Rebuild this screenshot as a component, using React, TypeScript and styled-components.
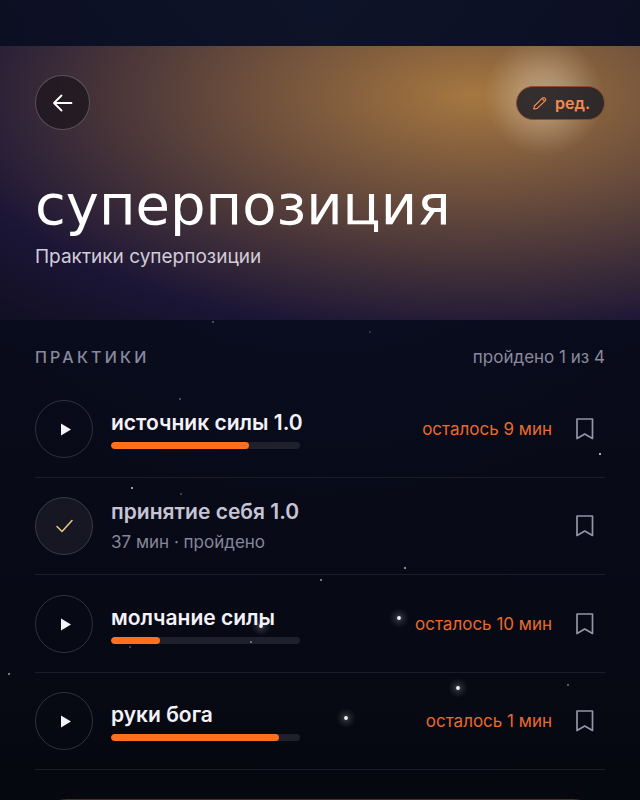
import React from "react";
import styled, { createGlobalStyle } from "styled-components";

const sans = `Inter, "Noto Sans", sans-serif`;

const GlobalStyle = createGlobalStyle`
  *, *::before, *::after { box-sizing: border-box; }
  html { background: #060810; scrollbar-width: none; }
  body { margin: 0; font-family: ${sans}; -webkit-font-smoothing: antialiased; }
  button { font: inherit; color: inherit; padding: 0; cursor: pointer; }
`;

const Page = styled.div`
  position: relative;
  min-height: 100vh;
  padding-top: 46px;
  color: #f4f2f8;
  background:
    radial-gradient(ellipse 70% 520px at 50% 0, rgba(14, 26, 52, 0.4), rgba(14, 26, 52, 0) 100%),
    linear-gradient(180deg, #0c0e20 0, #090b1b 320px, #070915 620px, #060810 800px);
`;

const Hero = styled.header`
  padding: 29px 35px 51px;
  background:
    radial-gradient(circle 60px at 85% 50px, rgba(255, 244, 226, 0.36) 0, rgba(255, 240, 220, 0.27) 40%, rgba(255, 238, 215, 0.06) 85%, rgba(255, 238, 215, 0) 100%),
    radial-gradient(ellipse 118% 122% at 74% 18%, #a67740 0%, #1b1536 72%, #0d0d1a 100%);
`;

const HeroBar = styled.div`
  display: flex;
  align-items: center;
  justify-content: space-between;
`;

const BackButton = styled.button`
  display: grid;
  place-items: center;
  width: 55px;
  height: 55px;
  border-radius: 50%;
  border: 1px solid rgba(255, 255, 255, 0.24);
  background: rgba(30, 22, 30, 0.78);
`;

const EditButton = styled.button`
  display: flex;
  align-items: center;
  gap: 7px;
  height: 34px;
  padding: 0 14px;
  border-radius: 17px;
  border: 1px solid #8d4a2c;
  background: rgba(38, 34, 40, 0.9);
  color: #f58a50;
  font-size: 16px;
  font-weight: 600;
`;

const Title = styled.h1`
  margin: 43px 0 0;
  font-family: "DejaVu Sans", ${sans};
  font-size: 56px;
  font-weight: 400;
  line-height: 64px;
  color: #fff;
`;

const Subtitle = styled.p`
  margin: 8px 0 0;
  font-size: 19px;
  line-height: 24px;
  color: #d3cdd8;
`;

const Section = styled.main`
  padding: 0 35px 35px;
`;

const SectionHead = styled.div`
  display: flex;
  align-items: center;
  justify-content: space-between;
  padding: 25px 0 11px;
  line-height: 24px;
  color: #8a8a9c;
`;

const SectionTitle = styled.h2`
  margin: 0;
  font-size: 16px;
  font-weight: 500;
  letter-spacing: 0.2em;
  text-transform: uppercase;
`;

const Count = styled.span`
  font-size: 17px;
`;

const List = styled.ul`
  display: grid;
  grid-auto-rows: 1fr;
  min-height: 390px;
  margin: 0;
  padding: 0;
  list-style: none;
`;

const Row = styled.li`
  display: flex;
  align-items: center;
  padding-top: 1px;
  border-bottom: 1px solid #1b1d29;
`;

const StateButton = styled.button<{ $done?: boolean }>`
  display: grid;
  place-items: center;
  flex: none;
  width: 58px;
  height: 58px;
  border-radius: 50%;
  border: 1px solid ${(p) => (p.$done ? "#3a3b45" : "#30313c")};
  background: ${(p) => (p.$done ? "#161722" : "transparent")};
`;

const Info = styled.div`
  flex: 1;
  min-width: 0;
  margin-left: 18px;
`;

const Name = styled.h3<{ $done?: boolean }>`
  margin: 0;
  font-size: 21px;
  font-weight: 600;
  line-height: 28px;
  white-space: nowrap;
  color: ${(p) => (p.$done ? "#c6c4d4" : "#f4f2f8")};
`;

const Meta = styled.p`
  margin: 4px 0 0;
  font-size: 17px;
  line-height: 24px;
  color: #85869a;
`;

const Track = styled.div`
  width: 189px;
  height: 7px;
  margin-top: 5px;
  border-radius: 4px;
  overflow: hidden;
  background: #1e202c;
`;

const Fill = styled.div`
  height: 100%;
  border-radius: 4px;
  background: #ff6f1c;
`;

const Left = styled.span`
  font-size: 17px;
  line-height: 24px;
  white-space: nowrap;
  color: #ea6a2a;
`;

const SaveButton = styled.button`
  display: grid;
  place-items: center;
  width: 40px;
  height: 40px;
  margin-left: 13px;
  border: 0;
  background: none;
  color: #9594a8;
`;

const NextCard = styled.div`
  height: 96px;
  margin-top: 29px;
  border: 1px solid #5a2a24;
  border-radius: 32px;
`;

const Sky = styled.svg`
  position: absolute;
  inset: 0;
  width: 100%;
  height: 800px;
  pointer-events: none;
`;

const dots = [
  { x: 213, y: 322, r: 1, o: 0.35 },
  { x: 370, y: 332, r: 1, o: 0.2 },
  { x: 180, y: 399, r: 1, o: 0.35 },
  { x: 600, y: 454, r: 1, o: 0.9 },
  { x: 132, y: 488, r: 1, o: 0.8 },
  { x: 181, y: 494, r: 1, o: 0.3 },
  { x: 405, y: 568, r: 1, o: 0.7 },
  { x: 321, y: 580, r: 1, o: 0.6 },
  { x: 130, y: 647, r: 1, o: 0.3 },
  { x: 251, y: 642, r: 1, o: 0.45 },
  { x: 9, y: 674, r: 1, o: 0.6 },
  { x: 568, y: 685, r: 1, o: 0.45 },
];

const brightStars = [
  { x: 261, y: 626 },
  { x: 399, y: 618 },
  { x: 458, y: 688 },
  { x: 346, y: 718 },
];

const pct = (x: number) => `${(x / 640) * 100}%`;

const Stars = () => (
  <Sky aria-hidden="true">
    <defs>
      <radialGradient id="glow">
        <stop offset="0" stopColor="#fff" stopOpacity="0.24" />
        <stop offset="0.5" stopColor="#fff" stopOpacity="0.08" />
        <stop offset="1" stopColor="#fff" stopOpacity="0" />
      </radialGradient>
    </defs>
    {dots.map((s) => (
      <circle key={`${s.x}-${s.y}`} cx={pct(s.x)} cy={s.y} r={s.r} fill="#fff" opacity={s.o} />
    ))}
    {brightStars.map((s) => (
      <g key={`${s.x}-${s.y}`}>
        <circle cx={pct(s.x)} cy={s.y} r="10" fill="url(#glow)" />
        <circle cx={pct(s.x)} cy={s.y} r="1.9" fill="#f4f4fa" />
      </g>
    ))}
  </Sky>
);

const ArrowIcon = () => (
  <svg width="24" height="24" viewBox="0 0 24 24" fill="none" stroke="#fff" strokeWidth="1.8" strokeLinecap="round" strokeLinejoin="round" aria-hidden="true">
    <path d="M20.5 12H3M10.5 4.5L3 12l7.5 7.5" />
  </svg>
);

const PencilIcon = () => (
  <svg width="17" height="16" viewBox="0 0 17 16" fill="none" stroke="currentColor" strokeWidth="1.2" strokeLinecap="round" strokeLinejoin="round" aria-hidden="true">
    <path d="M2.8 14L3.4 11L11.6 2.8h2l1 1v1.6L6.2 13.4zM11 3.6l2.6 2.6" />
  </svg>
);

const PlayIcon = () => (
  <svg width="16" height="16" viewBox="0 0 16 16" fill="#f4f2f8" aria-hidden="true">
    <path d="M5 2.5L15 8.5L5 14.5z" />
  </svg>
);

const CheckIcon = () => (
  <svg width="20" height="20" viewBox="0 0 20 20" fill="none" stroke="#ecc888" strokeWidth="1.5" strokeLinecap="round" strokeLinejoin="round" aria-hidden="true">
    <path d="M3 10.5L8 15.5L18 4.5" />
  </svg>
);

const BookmarkIcon = () => (
  <svg width="22" height="24" viewBox="0 0 22 24" fill="none" stroke="currentColor" strokeWidth="1.7" strokeLinejoin="round" aria-hidden="true">
    <path d="M3 2h15.5v19.5l-7.75-4.4L3 21.5z" />
  </svg>
);

type Practice = { name: string; progress?: number; left?: string; meta?: string };

const practices: Practice[] = [
  { name: "источник силы 1.0", progress: 73, left: "осталось 9 мин" },
  { name: "принятие себя 1.0", meta: "37 мин · пройдено" },
  { name: "молчание силы", progress: 26, left: "осталось 10 мин" },
  { name: "руки бога", progress: 89, left: "осталось 1 мин" },
];

const PracticeRow = ({ name, progress, left, meta }: Practice) => {
  const done = progress === undefined;
  return (
    <Row>
      <StateButton type="button" $done={done} aria-label={name}>
        {done ? <CheckIcon /> : <PlayIcon />}
      </StateButton>
      <Info>
        <Name $done={done}>{name}</Name>
        {done ? (
          <Meta>{meta}</Meta>
        ) : (
          <Track role="progressbar" aria-label={name} aria-valuenow={progress}>
            <Fill style={{ width: `${progress}%` }} />
          </Track>
        )}
      </Info>
      {left && <Left>{left}</Left>}
      <SaveButton type="button" aria-label="В закладки">
        <BookmarkIcon />
      </SaveButton>
    </Row>
  );
};

export default function App() {
  return (
    <>
      <GlobalStyle />
      <Page>
        <Hero>
          <HeroBar>
            <BackButton type="button" aria-label="Назад">
              <ArrowIcon />
            </BackButton>
            <EditButton type="button">
              <PencilIcon />
              ред.
            </EditButton>
          </HeroBar>
          <Title>суперпозиция</Title>
          <Subtitle>Практики суперпозиции</Subtitle>
        </Hero>
        <Section>
          <SectionHead>
            <SectionTitle>Практики</SectionTitle>
            <Count>пройдено 1 из 4</Count>
          </SectionHead>
          <List>
            {practices.map((p) => (
              <PracticeRow key={p.name} {...p} />
            ))}
          </List>
          <NextCard />
        </Section>
        <Stars />
      </Page>
    </>
  );
}
